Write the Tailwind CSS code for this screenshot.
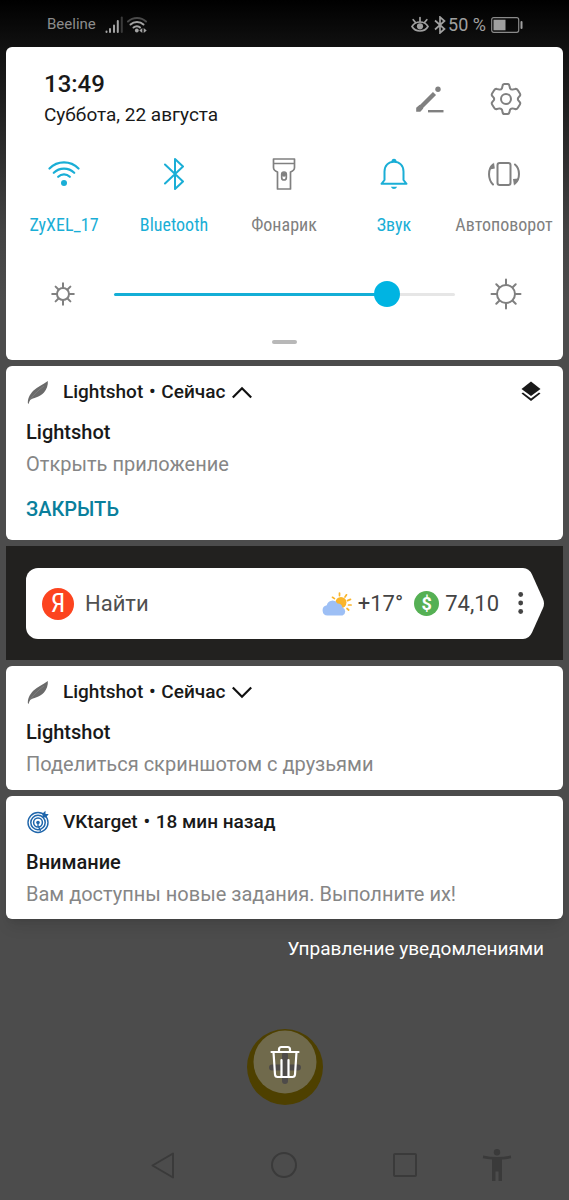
<!DOCTYPE html>
<html lang="ru">
<head>
<meta charset="utf-8">
<meta name="viewport" content="width=device-width, initial-scale=1">
<title>Панель уведомлений</title>
<script src="https://cdn.jsdelivr.net/npm/@tailwindcss/browser@4"></script>
</head>
<body class="min-h-screen flex flex-col bg-[#4c4c4c] bg-[linear-gradient(to_bottom,#000_0px,#111_48px,#1e1e1e_100px,#434343_230px,#4c4c4c_300px)] font-['Roboto',sans-serif] text-[#191919]">

<header class="flex h-[47px] items-center justify-between pt-[2px] pl-[47px] pr-[46px] text-[#a0a0a0]">
  <div class="flex items-center">
    <span class="text-[15px] text-[#8c8c8c]">Beeline</span>
    <svg class="ml-[9px] h-[18px] w-[18px]" viewBox="0 0 18 18" fill="none" stroke="#a3a3a3" stroke-width="2" stroke-linecap="round" aria-hidden="true"><path d="M1.500 15.500v.5M5 13v3M9 9.500v6.500M12.800 5v11"/><path d="M16.800 1.500v14.500" stroke="#3a3a3a"/></svg>
    <svg class="ml-1 h-[18px] w-5" viewBox="0 0 20 18" fill="none" stroke="#a3a3a3" stroke-width="2" stroke-linecap="round" aria-hidden="true"><path d="M1 5.500C6 .8 14 .8 19 5.500" stroke="#4a4a4a"/><path d="M3.500 8.500C7 5.300 13 5.300 16.500 8.500M6.500 11.500C8.500 9.800 11.500 9.800 13 11.500"/><g fill="#a3a3a3" stroke="none"><circle cx="9.800" cy="14.500" r="1.900"/><path d="M15.300 12v5l-3-2.500zM16.700 12v5l3-2.500z"/></g></svg>
  </div>
  <div class="flex items-center">
    <svg class="h-[18px] w-[18px]" viewBox="0 0 18 18" fill="none" stroke="#a0a0a0" stroke-width="1.700" stroke-linecap="round" aria-hidden="true"><path d="M1 10.500C4.500 4.500 13.500 4.500 17 10.500C13.500 16.500 4.500 16.500 1 10.500Z"/><circle cx="9" cy="10.300" r="3.100" fill="#a0a0a0" stroke="none"/><path d="M9 5.500V1.500M4.500 6.500 2.200 3.700M13.500 6.500l2.300-2.800"/></svg>
    <svg class="ml-[5px] h-[18px] w-3" viewBox="0 0 12 18" fill="none" stroke="#a0a0a0" stroke-width="1.700" aria-hidden="true"><path d="M1 4.500 10.500 13 6 17V1l4.500 4L1 13.500"/></svg>
    <span class="ml-[2px] text-lg">50 %</span>
    <svg class="ml-[5px] h-4 w-8" viewBox="0 0 32 16" aria-hidden="true"><rect x=".7" y=".7" width="27" height="14.600" rx="2" fill="none" stroke="#8a8a8a" stroke-width="1.200"/><rect x="2.500" y="2.700" width="12" height="10.600" fill="#a0a0a0"/><rect x="29.500" y="4" width="2" height="8" rx="1" fill="#a0a0a0"/></svg>
  </div>
</header>

<main class="flex flex-col gap-[6px] px-[6px]">

  <section class="rounded-md bg-white pl-[3px] pr-1 pt-[21px] pb-4" aria-label="Быстрые настройки">
    <div class="flex items-center justify-between pl-[35px] pr-[37px]">
      <div>
        <p class="text-2xl leading-8 font-medium">13:49</p>
        <p class="text-[19px] leading-[30px]">Суббота, 22 августа</p>
      </div>
      <div class="flex items-center gap-11">
        <button type="button" aria-label="Изменить"><svg class="block size-8" viewBox="0 0 32 32" fill="none" stroke="#808080" aria-hidden="true"><path d="M4.500 26.500 20.500 10.500" stroke-width="4.400"/><path d="M2.200 28.800v-4l3.500-3 3.600 3.600-3 3.400z" fill="#808080" stroke="none"/><circle cx="24" cy="6.300" r="2.700" fill="#808080" stroke="none"/><path d="M14 28.200h15.500" stroke-width="2.400"/></svg></button>
        <button type="button" aria-label="Настройки"><svg class="block size-8" viewBox="0 0 32 32" fill="none" stroke="#808080" stroke-width="2" stroke-linejoin="round" aria-hidden="true"><circle cx="16" cy="16" r="5"/><path d="M12.500 3Q12.800 1 14.500 1h3Q19.200 1 19.500 3L20 5.200Q20.800 6.800 22.500 6.600L25 6Q26.800 5.500 27.700 7L29.900 10.500Q30.800 12 29.500 13.300L28.300 14.600Q27.400 16 28.300 17.400L29.500 18.700Q30.800 20 29.900 21.500L27.700 25Q26.800 26.500 25 26L22.500 25.400Q20.800 25.200 20 26.800L19.500 29Q19.200 31 17.500 31h-3Q12.800 31 12.500 29L12 26.800Q11.200 25.200 9.500 25.400L7 26Q5.200 26.500 4.300 25L2.100 21.500Q1.200 20 2.500 18.700L3.700 17.400Q4.600 16 3.700 14.600L2.500 13.300Q1.200 12 2.100 10.500L4.300 7Q5.200 5.500 7 6L9.500 6.600Q11.200 6.800 12 5.200Z"/></svg></button>
      </div>
    </div>

    <div class="mt-7 grid grid-cols-5 font-['Roboto_Condensed','Liberation_Sans_Narrow','Roboto',sans-serif] text-[18px] leading-6 whitespace-nowrap text-[#808080]">
      <button type="button" class="flex flex-col items-center gap-[23px] text-[#1aaed6]"><svg class="size-8" viewBox="0 0 32 32" fill="none" stroke="currentColor" stroke-width="2.200" stroke-linecap="round" aria-hidden="true"><path d="M1.500 10.500C9.500 2.300 22.500 2.300 30.500 10.500M5.800 14.800C11.500 9.300 20.500 9.300 26.200 14.800M10.200 18.800C13.500 15.600 18.500 15.600 21.800 18.800"/><circle cx="16" cy="25" r="3" fill="currentColor" stroke="none"/></svg><span>ZyXEL_17</span></button>
      <button type="button" class="flex flex-col items-center gap-[23px] text-[#1aaed6]"><svg class="size-8" viewBox="0 0 32 32" fill="none" stroke="currentColor" stroke-width="2" stroke-linecap="round" stroke-linejoin="round" aria-hidden="true"><path d="M7 6.500 25 23.500 17 31V1L25 8.500 7 25.500"/></svg><span>Bluetooth</span></button>
      <button type="button" class="flex flex-col items-center gap-[23px]"><svg class="size-8" viewBox="0 0 32 32" fill="none" stroke="currentColor" stroke-width="1.700" stroke-linejoin="round" aria-hidden="true"><path d="M5.500 1h21v8.500Q26.500 12.500 22.500 14V31h-13V14Q5.500 12.500 5.500 9.500ZM5.500 5.500h21"/><rect x="13.700" y="14" width="4.600" height="8" rx="2.300"/><circle cx="16" cy="16.500" r="2.200" fill="currentColor" stroke="none"/></svg><span>Фонарик</span></button>
      <button type="button" class="flex flex-col items-center gap-[23px] text-[#1aaed6]"><svg class="size-8" viewBox="0 0 32 32" fill="none" stroke="currentColor" stroke-width="2" stroke-linecap="round" stroke-linejoin="round" aria-hidden="true"><path d="M3.500 25.800h25L25.500 22V13.500C25.500 7.500 21.500 3.700 16 3.700S6.500 7.500 6.500 13.500V22Z"/><path d="M13.500 3.200a2.500 2.500 0 0 1 5 0zM12.800 28.800h6.400Q18 31 16 31t-3.200-2.200z" fill="currentColor" stroke="none"/></svg><span>Звук</span></button>
      <button type="button" class="flex flex-col items-center gap-[23px]"><svg class="size-8" viewBox="0 0 32 32" fill="none" stroke="currentColor" stroke-width="2" stroke-linecap="round" aria-hidden="true"><rect x="9.500" y="5" width="13" height="22" rx="2.200"/><path d="M5 6.500C-.3 11-.3 21 5 26.500M27 6.500C32.300 11 32.300 21 27 25.500"/><path d="M1.800 11.500 6 4.500 6.800 10.500zM30.200 20.500 26 27.800 25 21z" fill="currentColor" stroke="none"/></svg><span>Автоповорот</span></button>
    </div>

    <div class="mt-[41px] flex items-center pl-[38px] pr-[37px]">
      <svg class="size-8 shrink-0" viewBox="0 0 32 32" fill="none" stroke="#808080" stroke-width="2" stroke-linecap="round" aria-hidden="true"><circle cx="16" cy="16" r="6"/><path d="M16 9.500V5.200M16 22.500v4.300M9.500 16H5.200M22.500 16h4.300M11.500 11.500 8.600 8.600M20.500 20.500l2.900 2.900M11.500 20.500l-2.900 2.900M20.500 11.500l2.900-2.900"/></svg>
      <input type="range" min="0" max="1000" value="825" aria-label="Яркость" class="mx-[35px] h-[26px] min-w-0 flex-1 appearance-none bg-transparent [&::-webkit-slider-runnable-track]:h-[3px] [&::-webkit-slider-runnable-track]:rounded-full [&::-webkit-slider-runnable-track]:bg-[linear-gradient(to_right,#14aed6_80%,#e6e6e6_80%)] [&::-webkit-slider-thumb]:-mt-[12px] [&::-webkit-slider-thumb]:size-[26px] [&::-webkit-slider-thumb]:appearance-none [&::-webkit-slider-thumb]:rounded-full [&::-webkit-slider-thumb]:bg-[#00b4e2]">
      <svg class="size-8 shrink-0" viewBox="0 0 32 32" fill="none" stroke="#808080" stroke-width="2" stroke-linecap="round" aria-hidden="true"><circle cx="16" cy="16" r="9"/><path d="M16 6.500V1.500M16 25.500v5M6.500 16h-5M25.500 16h5M9.300 9.300 6.300 6.300M22.700 22.700l3 3M9.300 22.700l-3 3M22.700 9.300l3-3"/></svg>
    </div>
    <div class="mx-auto mt-[30px] h-1 w-[25px] rounded-full bg-[#b8b8b8]"></div>
  </section>

  <article class="rounded-md bg-white px-5 pt-[10px] pb-[15px]">
    <div class="flex h-8 items-center text-[19px] font-medium">
      <svg class="mr-[13px] size-6 shrink-0" viewBox="0 0 24 24" aria-hidden="true"><path d="M2 23.800C1.300 19.500 3.500 14.500 7.500 10.500C11.500 6.500 17 5 21.800 1C22.300 5 20.500 9.500 18 12.500C15.500 15.300 13 16.300 10.500 17.300C8 18.300 5.500 18.800 4.200 20Q3.200 21.500 2.600 23.800Z" fill="#6a6a6a"/><path d="M4.500 19C8.500 14 13 9.500 18 6" fill="none" stroke="#8c8c8c" stroke-width=".6"/></svg>
      <span>Lightshot <span class="mx-px">•</span> Сейчас</span>
      <button type="button" aria-label="Свернуть" class="ml-[7px]"><svg class="block h-4 w-5" viewBox="0 0 20 16" fill="none" stroke="#111" stroke-width="2.200" aria-hidden="true"><path d="M.8 13.500 10 4.300l9.200 9.200"/></svg></button>
      <svg class="ml-auto size-6" viewBox="0 0 24 24" fill="#191919" aria-hidden="true"><path d="M12 1.500 21.500 9 12 16 2.500 9Z"/><path d="M2.500 13.500 4 12.500l8 6 8-6 1.500 1L12 21Z"/></svg>
    </div>
    <h2 class="mt-2 text-xl leading-8 font-medium">Lightshot</h2>
    <p class="text-xl leading-8 text-[#868686]">Открыть приложение</p>
    <button type="button" class="mt-[13px] block text-xl leading-8 font-medium text-[#0a7f9c]">ЗАКРЫТЬ</button>
  </article>

  <form class="bg-[#22211f] pt-[22px] pb-[21px] pl-5 pr-[19px]" aria-label="Яндекс">
    <div class="flex items-center">
      <div class="flex h-[71px] min-w-0 flex-1 items-center rounded-l-xl bg-white pl-4 text-[22px] text-[#444]">
        <span class="flex size-8 shrink-0 items-center justify-center rounded-full bg-[#fc441f] font-['Roboto_Condensed','Liberation_Sans_Narrow','Roboto',sans-serif] text-[26px] text-white" aria-hidden="true">Я</span>
        <input type="text" placeholder="Найти" aria-label="Найти" class="ml-[11px] min-w-0 flex-1 bg-transparent outline-none placeholder:text-[#505050]">
        <svg class="h-6 w-[30px] shrink-0" viewBox="0 0 30 24" aria-hidden="true"><g stroke="#fab52a" stroke-width="1.700" stroke-linecap="round"><path d="M17.500 1v2.600M10.500 5.300l2 1.300M24.500 2.800l-1.500 2.200M25.500 8.600l3-1.200M26.500 13h2.600M25 16.500l1.700 1.500"/></g><circle cx="19" cy="10.500" r="5.500" fill="#fab52a"/><path d="M5.500 23.500A5.200 5.200 0 0 1 4.800 13.200 5.800 5.800 0 0 1 15.500 11.500 5 5 0 0 1 20.500 15.500 4.300 4.300 0 0 1 20.500 23.500Z" fill="#9dbff5"/></svg>
        <span class="ml-[6px]">+17°</span>
        <span class="ml-[11px] flex size-[25px] shrink-0 items-center justify-center rounded-full bg-[#55b054] text-lg font-bold text-white" aria-hidden="true">$</span>
        <span class="ml-[6px]">74,10</span>
        <span class="w-[15px]"></span>
      </div>
      <button type="button" aria-label="Ещё"><svg class="block h-[71px] w-[30px]" viewBox="0 0 30 71" aria-hidden="true"><path d="M0 0H9Q15 0 18 6.500L29 31Q31 35.500 29 40L18 64.500Q15 71 9 71H0Z" fill="#fff"/><g fill="#444"><circle cx="6.700" cy="26.500" r="2.400"/><circle cx="6.700" cy="35" r="2.400"/><circle cx="6.700" cy="43.500" r="2.400"/></g></svg></button>
    </div>
  </form>

  <article class="rounded-md bg-white px-5 pt-[10px] pb-[10px]">
    <div class="flex h-8 items-center text-[19px] font-medium">
      <svg class="mr-[13px] size-6 shrink-0" viewBox="0 0 24 24" aria-hidden="true"><path d="M2 23.800C1.300 19.500 3.500 14.500 7.500 10.500C11.500 6.500 17 5 21.800 1C22.300 5 20.500 9.500 18 12.500C15.500 15.300 13 16.300 10.500 17.300C8 18.300 5.500 18.800 4.200 20Q3.200 21.500 2.600 23.800Z" fill="#6a6a6a"/><path d="M4.500 19C8.500 14 13 9.500 18 6" fill="none" stroke="#8c8c8c" stroke-width=".6"/></svg>
      <span>Lightshot <span class="mx-px">•</span> Сейчас</span>
      <button type="button" aria-label="Развернуть" class="ml-[7px]"><svg class="block h-4 w-5" viewBox="0 0 20 16" fill="none" stroke="#111" stroke-width="2.200" aria-hidden="true"><path d="M.8 3.500 10 12.700l9.200-9.200"/></svg></button>
    </div>
    <h2 class="mt-2 text-xl leading-8 font-medium">Lightshot</h2>
    <p class="text-xl leading-8 text-[#868686]">Поделиться скриншотом с друзьями</p>
  </article>

  <article class="rounded-md bg-white px-5 pt-[10px] pb-[9px] shadow-lg">
    <div class="flex h-8 items-center text-[19px] font-medium">
      <svg class="mr-[13px] size-6 shrink-0" viewBox="0 0 24 24" fill="none" stroke="#1f66ab" aria-hidden="true"><circle cx="12" cy="12.500" r="10" stroke-width="1.400"/><circle cx="12" cy="12.500" r="7.200" stroke-width="1.500"/><circle cx="12" cy="12.500" r="4.400" stroke-width="1.500"/><circle cx="12" cy="12.500" r="1.800" fill="#1f66ab" stroke="none"/><path d="M12 12.500V16.500M12.500 16.500 14.500 21" stroke-width="1.300"/><path d="M16.500 7.500V3.500L19.500.8V4h3.200L20 7.500Z" fill="#1f66ab" stroke="none"/></svg>
      <span>VKtarget <span class="mx-px">•</span> 18 мин назад</span>
    </div>
    <h2 class="mt-2 text-xl leading-8 font-medium">Внимание</h2>
    <p class="text-xl leading-8 text-[#868686]">Вам доступны новые задания. Выполните их!</p>
  </article>
</main>

<a href="#" class="mt-[14px] mr-[25px] self-end text-[19px] leading-8 text-white">Управление уведомлениями</a>

<button type="button" aria-label="Удалить все уведомления" class="mx-auto mt-16 flex size-[76px] justify-center rounded-full bg-[#4e4000] pt-px">
  <svg class="size-16" viewBox="0 0 64 64" fill="none" aria-hidden="true"><circle cx="32" cy="32" r="31.500" fill="#706a4c"/><path d="M32 25v26M19 37.500h26" stroke="#4e4b49" stroke-width="6" stroke-linecap="round"/><g stroke="#fff" stroke-width="2.200" stroke-linecap="round" stroke-linejoin="round"><path d="M18.500 22h27M26 22v-2.500Q26 17 28.500 17h6Q37 17 37 19.500V22M20.500 22 22 44.500Q22.200 47 24.500 47h15Q41.800 47 42 44.500L43.500 22M28.500 30v16.500M35.500 30v16.500"/></g></svg>
</button>

<nav class="mt-auto flex h-[70px] items-center pl-[148px] pr-14 text-[#3a3a3a]" aria-label="Навигация">
  <div class="flex flex-1 items-center justify-between">
    <button type="button" aria-label="Назад"><svg class="block size-7" viewBox="0 0 28 28" fill="none" stroke="currentColor" stroke-width="2" stroke-linejoin="round" aria-hidden="true"><path d="M25 2.500v24L4.500 14.500Z"/></svg></button>
    <button type="button" aria-label="Домой"><svg class="block size-7" viewBox="0 0 28 28" fill="none" stroke="currentColor" stroke-width="2" aria-hidden="true"><circle cx="14" cy="14" r="12"/></svg></button>
    <button type="button" aria-label="Недавние"><svg class="block size-7" viewBox="0 0 28 28" fill="none" stroke="currentColor" stroke-width="2" aria-hidden="true"><rect x="3" y="3" width="22" height="22" rx="1"/></svg></button>
  </div>
  <button type="button" class="ml-[62px]" aria-label="Специальные возможности"><svg class="block size-8" viewBox="0 0 32 32" fill="currentColor" aria-hidden="true"><circle cx="16" cy="3.200" r="3.200"/><path d="M2.200 6.500Q16 9.500 29.800 6.500L30.200 9.300Q25 10.300 21 10.500V32H17.500V22.500H14.500V32H11V10.500Q7 10.300 1.800 9.300Z"/></svg></button>
</nav>
</body>
</html>
